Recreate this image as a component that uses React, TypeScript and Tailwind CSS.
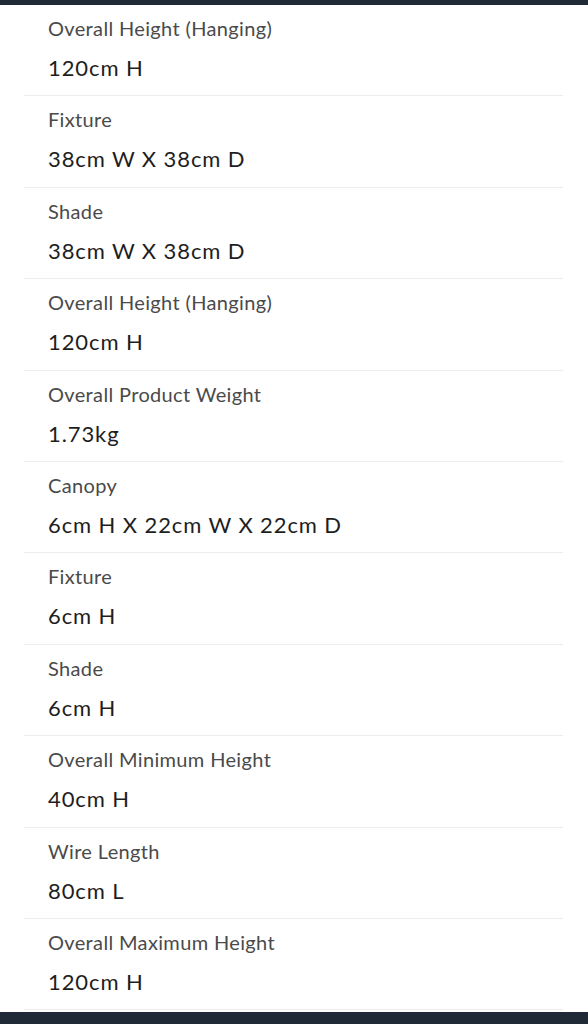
const specs = [
  { label: "Overall Height (Hanging)", value: "120cm H" },
  { label: "Fixture", value: "38cm W X 38cm D" },
  { label: "Shade", value: "38cm W X 38cm D" },
  { label: "Overall Height (Hanging)", value: "120cm H" },
  { label: "Overall Product Weight", value: "1.73kg" },
  { label: "Canopy", value: "6cm H X 22cm W X 22cm D" },
  { label: "Fixture", value: "6cm H" },
  { label: "Shade", value: "6cm H" },
  { label: "Overall Minimum Height", value: "40cm H" },
  { label: "Wire Length", value: "80cm L" },
  { label: "Overall Maximum Height", value: "120cm H" },
];

export default function App() {
  return (
    <div className="flex h-[1024px] w-[588px] flex-col overflow-hidden bg-white font-['Lato',sans-serif]">
      <div className="h-[5px] shrink-0 bg-[#1f2a36]" />
      <ul className="ml-[24px] w-[539px] flex-1">
        {specs.map((s, i) => (
          <li
            key={i}
            className="flex h-[91.4px] flex-col border-b border-[#ececec] pl-[24px] pt-[11px]"
          >
            <span className="text-[20px] leading-[24px] tracking-[0.35px] text-[#4a4a4a]">{s.label}</span>
            <span className="mt-[14px] text-[22px] leading-[28px] tracking-[0.9px] text-[#1e1e1e]">{s.value}</span>
          </li>
        ))}
      </ul>
      <div className="h-[12px] shrink-0 bg-[#1f2a36]" />
    </div>
  );
}
